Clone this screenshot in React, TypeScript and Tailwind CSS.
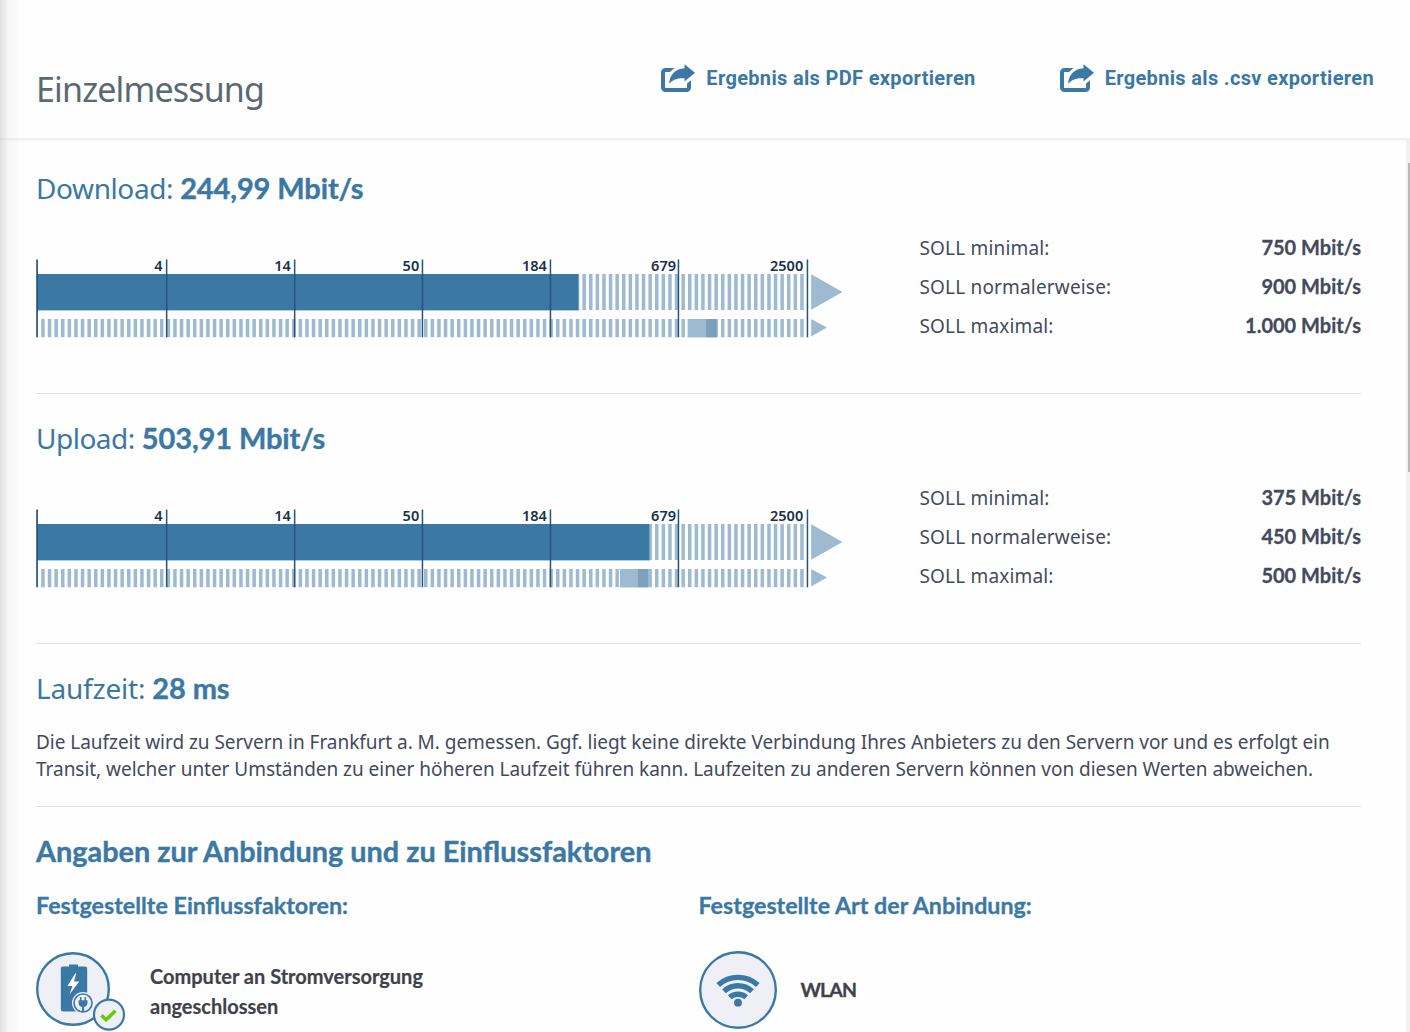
type Target = { label: string; value: string };

const ticks = [
  { x: 130.6, label: "4", end: 126.6 },
  { x: 258.6, label: "14", end: 254.8 },
  { x: 386.4, label: "50", end: 383.2 },
  { x: 514.4, label: "184", end: 510.8 },
  { x: 642.4, label: "679", end: 640 },
  { x: 771.4, label: "2500", end: 767.2 },
];

const stripes = Array.from({ length: 116 }, (_, i) => 5.2 + i * 6.6);

function SpeedChart({ bar, range }: { bar: number; range: [number, number, number] }) {
  return (
    <svg className="block h-20 w-[807px] shrink-0 overflow-visible" viewBox="0 0 807 80">
      <g fill="#9dbad1">
        {stripes.map((x) => (
          <g key={x}>
            <rect x={x} y="16" width="3.5" height="36" />
            <rect x={x} y="61" width="3.5" height="18.2" />
          </g>
        ))}
        <path d="M775.2 16.2 806.5 34 775.2 51.8Z" />
        <path d="M775.2 61 791 69.6 775.2 78.6Z" />
        <rect x={range[0]} y="61" width={range[1] - range[0]} height="18.4" />
      </g>
      <rect x={range[1]} y="61" width={range[2] - range[1]} height="18.4" fill="#7ca1bf" />
      <rect x="1" y="16" width={bar - 0.5} height="37" fill="#b4cadb" />
      <rect x="1" y="16" width={bar - 1} height="36" fill="#3b78a4" />
      <rect x="0.2" y="1.5" width="1.7" height="77.8" fill="#27547a" />
      {ticks.map((t) => (
        <g key={t.label}>
          <rect x={t.x - 0.7} y="1.5" width="1.5" height="77.8" fill="#27547a" />
          <text
            x={t.end}
            y="13"
            textAnchor="end"
            fill="#173248"
            className="font-['Noto_Sans'] text-[14.5px] font-semibold"
          >
            {t.label}
          </text>
        </g>
      ))}
    </svg>
  );
}

function Measurement({
  name,
  nameClass,
  value,
  bar,
  range,
  targets,
}: {
  name: string;
  nameClass: string;
  value: string;
  bar: number;
  range: [number, number, number];
  targets: Target[];
}) {
  return (
    <section className="h-[250px] border-b border-[#dfe7ec] pt-[23px]">
      <h2 className="flex h-[42px] items-baseline gap-[7px] leading-[42px] text-[#3b78a4]">
        <span className={nameClass}>{name}</span>
        <b className="font-['Lato'] text-[29px] tracking-[-0.12px] [-webkit-text-stroke:0.4px]">{value}</b>
      </h2>
      <div className="flex justify-between pt-5">
        <div className="pt-[29px]">
          <SpeedChart bar={bar} range={range} />
        </div>
        <dl className="w-[441.5px] text-[#434a5c]">
          {targets.map((t) => (
            <div key={t.label} className="flex h-[39px] items-center justify-between">
              <dt className="text-[19px] tracking-[0.17px]">{t.label}</dt>
              <dd className="pb-[3px] font-['Lato'] text-[20px] font-bold [-webkit-text-stroke:0.3px]">{t.value}</dd>
            </div>
          ))}
        </dl>
      </div>
    </section>
  );
}

function ExportLink({ children }: { children: string }) {
  return (
    <button className="flex items-center gap-[11px] font-['Roboto'] text-[20px] leading-7 font-bold tracking-[0.33px] text-[#3b78a4]">
      <svg className="h-7 w-[35px]" viewBox="0 0 35 28">
        <path
          d="M14.500 4H5.500A4.500 4.500 0 0 0 1 8.500v15A4.500 4.500 0 0 0 5.500 28h21a4.500 4.500 0 0 0 4.500-4.500v-7.300l-4 3.300V24H5V8h5Z"
          fill="currentColor"
        />
        <path
          d="M24.500.3 35 8.800 24.500 17.500v-3.200C18 14 13 15.300 9.200 19.800 9.500 10.800 15.600 4.600 24.500 4.300Z"
          fill="currentColor"
        />
      </svg>
      <span>{children}</span>
    </button>
  );
}

function PowerIcon() {
  return (
    <svg className="block h-[82px] w-[90px] shrink-0" viewBox="0 0 90 82">
      <circle cx="37" cy="38" r="35.8" fill="#eff0f6" stroke="#3b78a4" strokeWidth="2.4" />
      <path
        d="M33 13.500h9v2h7a2.200 2.200 0 0 1 2.200 2.200v40.600A2.200 2.200 0 0 1 49 60.500H27a2.200 2.200 0 0 1-2.200-2.200V17.700A2.200 2.200 0 0 1 27 15.500h6Z"
        fill="#3b78a4"
      />
      <path d="M39.200 22.500 31.500 35h5L33.500 43.500l9.700-13h-5.200L40.200 22.500Z" fill="#fff" />
      <circle cx="47" cy="52" r="11" fill="#eff0f6" />
      <circle cx="47" cy="52" r="9" fill="#eff0f6" stroke="#3b78a4" strokeWidth="1.6" />
      <path
        d="M44 46h1.500v3.200h3V46H50v3.200h1.500v3.300a4.200 4.200 0 0 1-3.400 3.500V61h-2v-5a4.200 4.200 0 0 1-3.500-3.500v-3.300H44Z"
        fill="#3b78a4"
      />
      <circle cx="73" cy="63.600" r="15" fill="#eff0f6" stroke="#3b78a4" strokeWidth="2.200" />
      <path d="m65.400 64.300 4.700 4.500 9.400-9" fill="none" stroke="#6c0" strokeWidth="3.600" />
    </svg>
  );
}

function WifiIcon() {
  return (
    <svg className="block size-[78px] shrink-0" viewBox="0 0 78 78">
      <circle cx="39" cy="39" r="37.800" fill="#eff0f6" stroke="#3b78a4" strokeWidth="2.400" />
      <g fill="none" stroke="#3b78a4" strokeWidth="5.400">
        <path d="M19.200 34a29.500 29.500 0 0 1 39.600 0" />
        <path d="M25 40.300a20.500 20.500 0 0 1 28 0" />
        <path d="M30.800 46.300a12.400 12.400 0 0 1 16.400 0" />
      </g>
      <circle cx="39" cy="51.700" r="3.900" fill="#3b78a4" />
    </svg>
  );
}

export default function App() {
  return (
    <div className="relative flex h-[1032px] w-[1410px] flex-col overflow-hidden bg-[#fefefe] font-['Noto_Sans',sans-serif]">
      <div className="pointer-events-none absolute inset-y-0 left-0 w-5 bg-linear-to-r from-black/12 via-black/3 via-40% to-transparent" />
      <header className="flex h-[138px] shrink-0 justify-between pr-9 pl-9">
        <h1 className="pt-16 text-[34px] leading-[50px] tracking-[-0.85px] text-[#596a73]">
          Einzelmessung
        </h1>
        <div className="flex items-start gap-[83px] pt-16">
          <ExportLink>Ergebnis als PDF exportieren</ExportLink>
          <ExportLink>Ergebnis als .csv exportieren</ExportLink>
        </div>
      </header>
      <div className="flex min-h-0 grow border-t-2 border-[#edf1f2]">
        <main className="h-full grow bg-linear-to-b from-[#f9f9f9]/50 to-transparent to-[6px] pt-1 pr-[45px] pl-9">
          <Measurement
            name="Download:"
            nameClass="text-[28px] tracking-[-0.4px]"
            value="244,99 Mbit/s"
            bar={542.5}
            range={[651.6, 670, 680.7]}
            targets={[
              { label: "SOLL minimal:", value: "750 Mbit/s" },
              { label: "SOLL normalerweise:", value: "900 Mbit/s" },
              { label: "SOLL maximal:", value: "1.000 Mbit/s" },
            ]}
          />
          <Measurement
            name="Upload:"
            nameClass="text-[28px] tracking-[-0.5px]"
            value="503,91 Mbit/s"
            bar={613.5}
            range={[584, 602, 612.5]}
            targets={[
              { label: "SOLL minimal:", value: "375 Mbit/s" },
              { label: "SOLL normalerweise:", value: "450 Mbit/s" },
              { label: "SOLL maximal:", value: "500 Mbit/s" },
            ]}
          />
          <section className="h-[163px] border-b border-[#dfe7ec] pt-[23px]">
            <h2 className="flex h-[42px] items-baseline gap-[7px] leading-[42px] text-[#3b78a4]">
              <span className="text-[28px] tracking-[-0.2px]">Laufzeit:</span>
              <b className="font-['Lato'] text-[29px] tracking-[-0.12px] [-webkit-text-stroke:0.4px]">28 ms</b>
            </h2>
            <p className="pt-5 text-[19px] leading-[27px] tracking-[-0.035px] whitespace-nowrap text-[#434a5c]">
              Die Laufzeit wird zu Servern in Frankfurt a. M. gemessen. Ggf. liegt keine direkte Verbindung Ihres
              Anbieters zu den Servern vor und es erfolgt ein
              <br />
              Transit, welcher unter Umständen zu einer höheren Laufzeit führen kann. Laufzeiten zu anderen Servern
              können von diesen Werten abweichen.
            </p>
          </section>
          <section className="pt-[23px] font-['Lato'] font-bold text-[#3b78a4]">
            <h2 className="text-[28.85px] leading-[42px] [-webkit-text-stroke:0.4px]">
              Angaben zur Anbindung und zu Einflussfaktoren
            </h2>
            <div className="grid grid-cols-2 pt-[17px]">
              <div>
                <h3 className="text-[23.3px] leading-8 [-webkit-text-stroke:0.3px]">Festgestellte Einflussfaktoren:</h3>
                <div className="flex gap-6 pt-[30px]">
                  <PowerIcon />
                  <p className="pt-[10px] text-[20px] leading-[30px] text-[#3f4248] [-webkit-text-stroke:0.2px]">
                    Computer an Stromversorgung
                    <br />
                    angeschlossen
                  </p>
                </div>
              </div>
              <div>
                <h3 className="text-[23.25px] leading-8 [-webkit-text-stroke:0.3px]">Festgestellte Art der Anbindung:</h3>
                <div className="flex items-center gap-6 pt-[30px]">
                  <WifiIcon />
                  <p className="text-[19.5px] tracking-[-0.9px] text-[#3f4248] [-webkit-text-stroke:0.3px]">WLAN</p>
                </div>
              </div>
            </div>
          </section>
        </main>
        <div className="flex w-1 shrink-0 justify-end bg-[#f0f0f0] pt-[23px]">
          <div className="h-[309px] w-0.5 bg-[#b9b9b9]" />
        </div>
      </div>
    </div>
  );
}
